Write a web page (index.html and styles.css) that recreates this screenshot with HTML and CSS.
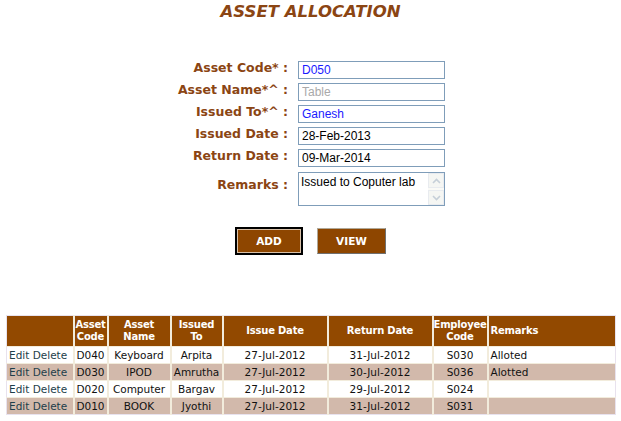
FILE: index.html
```html
<!DOCTYPE html>
<html>
<head>
<meta charset="utf-8">
<link rel="stylesheet" href="styles.css">
</head>
<body>
<h1 class="title">ASSET ALLOCATION</h1>
<div class="form">
  <label class="lbl">Asset Code* :</label>
  <div class="field"><input class="inp blue" value="D050"></div>
  <label class="lbl">Asset Name*^ :</label>
  <div class="field"><input class="inp grey" value="Table" disabled></div>
  <label class="lbl">Issued To*^ :</label>
  <div class="field"><input class="inp blue" value="Ganesh"></div>
  <label class="lbl">Issued Date :</label>
  <div class="field"><input class="inp" value="28-Feb-2013"></div>
  <label class="lbl">Return Date :</label>
  <div class="field"><input class="inp" value="09-Mar-2014"></div>
  <label class="lbl lbl-top">Remarks :</label>
  <div class="field field-ta">
    <div class="ta">
      <textarea class="ta-text">Issued to Coputer lab</textarea>
      <div class="sb">
        <div class="sb-btn"><svg width="9" height="6" viewBox="0 0 9 6"><path d="M1 5 L4.5 1.5 L8 5" fill="none" stroke="#c6cfd8" stroke-width="1.6"/></svg></div>
        <div class="sb-track"></div>
        <div class="sb-btn"><svg width="9" height="6" viewBox="0 0 9 6"><path d="M1 1 L4.5 4.5 L8 1" fill="none" stroke="#c6cfd8" stroke-width="1.6"/></svg></div>
      </div>
    </div>
  </div>
</div>
<div class="buttons">
  <button class="btn btn-add">ADD</button>
  <button class="btn btn-view">VIEW</button>
</div>
<table class="grid">
  <colgroup>
    <col class="c1"><col class="c2"><col class="c3"><col class="c4"><col class="c5"><col class="c6"><col class="c7"><col class="c8">
  </colgroup>
  <thead>
    <tr>
      <th></th><th>Asset<br>Code</th><th>Asset<br>Name</th><th>Issued<br>To</th><th>Issue Date</th><th>Return Date</th><th>Employee<br>Code</th><th class="left">Remarks</th>
    </tr>
  </thead>
  <tbody>
    <tr><td class="act"><a>Edit</a> <a>Delete</a></td><td>D040</td><td>Keyboard</td><td>Arpita</td><td>27-Jul-2012</td><td>31-Jul-2012</td><td>S030</td><td class="left">Alloted</td></tr>
    <tr class="alt"><td class="act"><a>Edit</a> <a>Delete</a></td><td>D030</td><td>IPOD</td><td>Amrutha</td><td>27-Jul-2012</td><td>30-Jul-2012</td><td>S036</td><td class="left">Alotted</td></tr>
    <tr><td class="act"><a>Edit</a> <a>Delete</a></td><td>D020</td><td>Computer</td><td>Bargav</td><td>27-Jul-2012</td><td>29-Jul-2012</td><td>S024</td><td class="left"></td></tr>
    <tr class="alt"><td class="act"><a>Edit</a> <a>Delete</a></td><td>D010</td><td>BOOK</td><td>Jyothi</td><td>27-Jul-2012</td><td>31-Jul-2012</td><td>S031</td><td class="left"></td></tr>
  </tbody>
</table>
</body>
</html>
```
FILE: styles.css
```css
html, body {
  margin: 0;
  padding: 0;
  background: #ffffff;
}
body {
  font-family: "DejaVu Sans", Verdana, sans-serif;
}
.title {
  margin: 0;
  padding-top: 1px;
  height: 22px;
  text-align: center;
  font-size: 16.5px;
  font-weight: bold;
  font-style: italic;
  color: #8b4513;
  line-height: 21px;
}
.form {
  margin-top: 36px;
  display: grid;
  grid-template-columns: 288px 147px;
  column-gap: 10px;
  row-gap: 4px;
}
.lbl {
  text-align: right;
  font-size: 12.5px;
  font-weight: bold;
  color: #8b4513;
  line-height: 18px;
  white-space: nowrap;
}
.lbl-top {
  padding-top: 7px;
}
.field {
  height: 18px;
}
.field-ta {
  height: 34px;
  padding-top: 3px;
}
.inp {
  box-sizing: border-box;
  width: 147px;
  height: 18px;
  margin: 0;
  padding: 0 3px;
  border: 1px solid #7f9db9;
  font-family: "Liberation Sans", Arial, sans-serif;
  font-size: 12px;
  color: #000;
  background: #fff;
  outline: none;
}
.inp.blue { color: #1a1aff; }
.inp.grey { color: #a9a9a9; background: #fff; }
.ta {
  box-sizing: border-box;
  width: 147px;
  height: 34px;
  border: 1px solid #7f9db9;
  display: flex;
  background: #fff;
}
.ta-text {
  flex: 1;
  border: 0;
  margin: 0;
  padding: 2px 2px;
  resize: none;
  overflow: hidden;
  font-family: "Liberation Sans", Arial, sans-serif;
  font-size: 12px;
  line-height: 14px;
  color: #000;
  outline: none;
}
.sb {
  width: 16px;
  display: flex;
  flex-direction: column;
  background: #fafaf6;
}
.sb-btn {
  box-sizing: border-box;
  height: 15px;
  border: 1px solid #e8ebef;
  background: #f5f6f3;
  display: flex;
  align-items: center;
  justify-content: center;
}
.sb-track { flex: 1; }
.buttons {
  margin-top: 21px;
  display: flex;
  justify-content: center;
  gap: 14px;
  padding-left: 0;
}
.btn {
  box-sizing: border-box;
  height: 27px;
  background: #8e4600;
  color: #fff;
  font-family: "DejaVu Sans", Verdana, sans-serif;
  font-size: 10.5px;
  font-weight: bold;
  padding: 0;
  margin: 0;
}
.btn-add {
  width: 68px;
  height: 28px;
  border: 2px solid #000;
  box-shadow: inset 0 0 0 1px #d8c0a8;
}
.btn-view {
  width: 69px;
  margin-top: 1px;
  height: 26px;
  border: 1px solid;
  border-color: #b0a898 #707070 #707070 #b0a898;
}
.grid {
  margin: 60px 0 0 6px;
  width: 610px;
  border-collapse: collapse;
  table-layout: fixed;
  border: 1px solid #e8e2ee;
  font-size: 10.5px;
}
.c1 { width: 67px; }
.c2 { width: 34px; }
.c3 { width: 63px; }
.c4 { width: 52px; }
.c5 { width: 105px; }
.c6 { width: 105px; }
.c7 { width: 55px; }
.c8 { width: auto; }
.grid th {
  background: #924900;
  color: #fff;
  font-weight: bold;
  height: 30px;
  line-height: 12px;
  padding: 0;
  border-left: 2px solid #f2ecdc;
  text-align: center;
  font-size: 10px;
  letter-spacing: -0.2px;
}
.grid td {
  height: 16px;
  padding: 0 1px;
  border-left: 2px solid #f2ecdc;
  border-top: 1px solid #f2ecdc;
  text-align: center;
  color: #111;
  white-space: nowrap;
  line-height: 16px;
}
.grid th:first-child, .grid td:first-child { border-left: 0; }
.grid .left { text-align: left; padding-left: 2px; }
.grid td.act { text-align: left; padding-left: 2px; }
.grid a { color: #1d3e4a; }
.grid tr.alt td { background: #d2b9ab; }
```
